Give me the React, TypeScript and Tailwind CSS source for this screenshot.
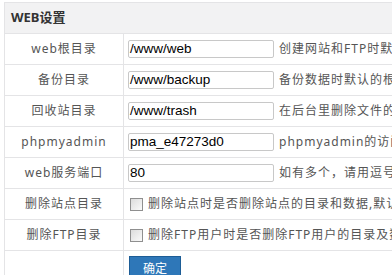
import React from "react";

const font = { fontFamily: '"Noto Sans", "Noto Sans CJK SC", sans-serif' };

function Label({ children }: { children: React.ReactNode }) {
  return (
    <div className="w-[119px] shrink-0 border-r border-[#e4e4e6] flex items-center justify-center text-[12px] tracking-[1px] text-[#555]">
      {children}
    </div>
  );
}

function InputRow({ label, value, desc }: { label: string; value: string; desc: string }) {
  return (
    <div className="flex h-[31px] border-b border-[#e4e4e6]">
      <Label>{label}</Label>
      <div className="flex items-center pl-[4px] whitespace-nowrap">
        <div
          className="w-[146px] h-[18px] border border-[#c8c8c8] rounded-[2px] bg-white flex items-center pl-[1px] text-[13.5px] text-black"
          style={{ fontFamily: '"Liberation Sans", Arial, sans-serif' }}
        >
          {value}
        </div>
        <span className="ml-[5px] text-[12px] tracking-[1px] text-[#555]">{desc}</span>
      </div>
    </div>
  );
}

function CheckRow({ label, desc }: { label: string; desc: string }) {
  return (
    <div className="flex h-[31px] border-b border-[#e4e4e6]">
      <Label>{label}</Label>
      <div className="flex items-center pl-[6px] whitespace-nowrap">
        <div className="w-[13px] h-[13px] border border-[#8f8f8f] bg-gradient-to-br from-[#dcdcdc] to-[#fafafa] shrink-0" />
        <span className="ml-[5px] text-[12px] tracking-[1px] text-[#555]">{desc}</span>
      </div>
    </div>
  );
}

export default function App() {
  return (
    <div className="w-[392px] h-[275px] overflow-hidden bg-white" style={font}>
      <div className="pt-[2px] pl-[4px]">
        <div className="w-[600px] border-l border-t border-[#e4e4e6]">
          <div className="h-[31px] bg-[#f2f2f3] border-b border-[#e4e4e6] flex items-center pl-[6px] text-[13px] font-bold text-[#333]">
            WEB设置
          </div>
          <InputRow label="web根目录" value="/www/web" desc="创建网站和FTP时默认的根目录" />
          <InputRow label="备份目录" value="/www/backup" desc="备份数据时默认的根目录" />
          <InputRow label="回收站目录" value="/www/trash" desc="在后台里删除文件的存放目录" />
          <InputRow label="phpmyadmin" value="pma_e47273d0" desc="phpmyadmin的访问目录" />
          <InputRow label="web服务端口" value="80" desc="如有多个，请用逗号隔开" />
          <CheckRow label="删除站点目录" desc="删除站点时是否删除站点的目录和数据,默认不删除" />
          <CheckRow label="删除FTP目录" desc="删除FTP用户时是否删除FTP用户的目录及数据" />
          <div className="flex h-[40px]">
            <div className="w-[119px] shrink-0 border-r border-[#e4e4e6]" />
            <div className="pl-[5px] pt-[5px]">
              <button className="w-[52px] h-[24px] bg-[#2e77b8] border border-[#1d5d96] text-white text-[12px] flex items-start justify-center pt-[3px]">
                确定
              </button>
            </div>
          </div>
        </div>
      </div>
    </div>
  );
}
